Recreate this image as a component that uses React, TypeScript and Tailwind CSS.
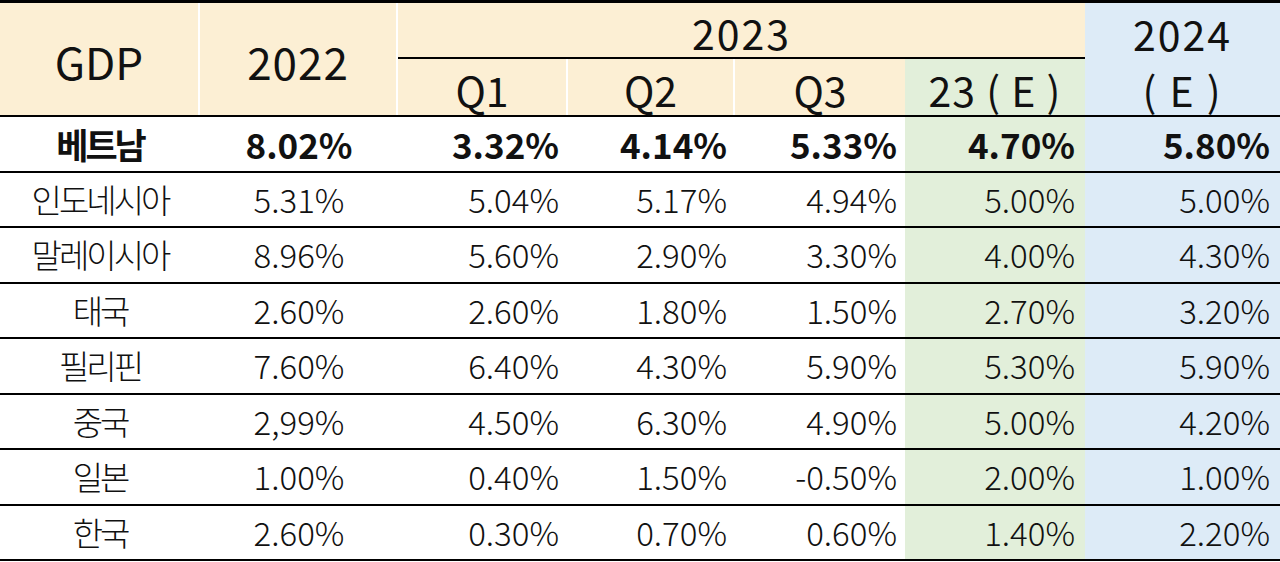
import React from "react";

type Row = { name: string; v: string[]; bold?: boolean };

const rows: Row[] = [
  { name: "베트남", v: ["8.02%", "3.32%", "4.14%", "5.33%", "4.70%", "5.80%"], bold: true },
  { name: "인도네시아", v: ["5.31%", "5.04%", "5.17%", "4.94%", "5.00%", "5.00%"] },
  { name: "말레이시아", v: ["8.96%", "5.60%", "2.90%", "3.30%", "4.00%", "4.30%"] },
  { name: "태국", v: ["2.60%", "2.60%", "1.80%", "1.50%", "2.70%", "3.20%"] },
  { name: "필리핀", v: ["7.60%", "6.40%", "4.30%", "5.90%", "5.30%", "5.90%"] },
  { name: "중국", v: ["2,99%", "4.50%", "6.30%", "4.90%", "5.00%", "4.20%"] },
  { name: "일본", v: ["1.00%", "0.40%", "1.50%", "-0.50%", "2.00%", "1.00%"] },
  { name: "한국", v: ["2.60%", "0.30%", "0.70%", "0.60%", "1.40%", "2.20%"] },
];

const cols = "grid grid-cols-[200px_198px_170px_167px_170px_180px_195px]";

export default function App() {
  return (
    <div className="w-[1280px] h-[562px] bg-white text-[#111] font-['Noto_Sans_CJK_KR',sans-serif] overflow-hidden">
      {/* header */}
      <div className={`${cols} grid-rows-[56px_56px] border-t-[3px] border-b-2 border-black h-[117px]`}>
        <div className="row-span-2 bg-[#fcefd4] border-r-2 border-white flex items-center justify-center text-[44px] leading-none pt-1">
          GDP
        </div>
        <div className="row-span-2 bg-[#fcefd4] border-r-2 border-white flex items-center justify-center text-[44px] leading-none tracking-[1px] pt-1">
          2022
        </div>
        <div className="col-span-4 bg-[#fcefd4] border-b-2 border-black flex items-center justify-center text-[41px] leading-none tracking-[2px] pt-1">
          2023
        </div>
        <div className="row-span-2 bg-[#ddebf7] flex flex-col items-center justify-center text-[41px] leading-none tracking-[2px] gap-[15px] pt-1">
          <span>2024</span>
          <span className="whitespace-pre">( E )</span>
        </div>
        <div className="bg-[#fcefd4] border-r-2 border-white flex items-center justify-center text-[41px] leading-none pt-1">
          Q1
        </div>
        <div className="bg-[#fcefd4] border-r-2 border-white flex items-center justify-center text-[41px] leading-none pt-1">
          Q2
        </div>
        <div className="bg-[#fcefd4] flex items-center justify-center text-[41px] leading-none pt-1">
          Q3
        </div>
        <div className="bg-[#e2efda] flex items-center justify-center text-[41px] leading-none tracking-[1px] pt-1 whitespace-pre">
          23 ( E )
        </div>
      </div>
      {/* body */}
      {rows.map((r) => (
        <div
          key={r.name}
          className={`${cols} h-[55.5px] border-b-2 border-black leading-none ${r.bold ? "font-bold text-[35px]" : "font-light text-[33px]"}`}
        >
          <div className="flex items-center justify-center tracking-[-3px]">{r.name}</div>
          <div className="flex items-center justify-center">{r.v[0]}</div>
          <div className="flex items-center justify-end pr-[9px]">{r.v[1]}</div>
          <div className="flex items-center justify-end pr-[8px]">{r.v[2]}</div>
          <div className="flex items-center justify-end pr-[8px]">{r.v[3]}</div>
          <div className="flex items-center justify-end pr-[10px] bg-[#e2efda]">{r.v[4]}</div>
          <div className="flex items-center justify-end pr-[10px] bg-[#ddebf7]">{r.v[5]}</div>
        </div>
      ))}
    </div>
  );
}
